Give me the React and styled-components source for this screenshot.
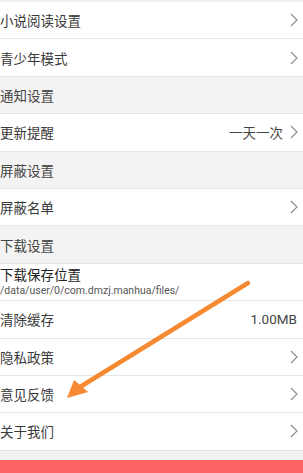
import React from "react";
import styled, { createGlobalStyle } from "styled-components";

const Global = createGlobalStyle`
  body {
    margin: 0;
    background: #f2f2f2;
    font-family: "Noto Sans CJK SC", "Noto Sans", sans-serif;
  }
`;

const items = [
  { type: "row", label: "小说阅读设置", arrow: true },
  { type: "row", label: "青少年模式", arrow: true },
  { type: "head", label: "通知设置" },
  { type: "row", label: "更新提醒", value: "一天一次", arrow: true },
  { type: "head", label: "屏蔽设置" },
  { type: "row", label: "屏蔽名单", arrow: true },
  { type: "head", label: "下载设置" },
  { type: "path", label: "下载保存位置", sub: "/data/user/0/com.dmzj.manhua/files/" },
  { type: "row", label: "清除缓存", value: "1.00MB", latin: true },
  { type: "row", label: "隐私政策", arrow: true },
  { type: "row", label: "意见反馈", arrow: true },
  { type: "row", label: "关于我们", arrow: true },
];

const Chevron = () => (
  <svg width="8" height="14" viewBox="0 0 8 14">
    <path d="M1 1 L7 7 L1 13" fill="none" stroke="#8a8a8a" strokeWidth="1.1" />
  </svg>
);

const Settings = () => {
  return (
    <Page>
      <Global />
      <List>
        {items.map((item, index) =>
          item.type === "head" ? (
            <Head key={index}>{item.label}</Head>
          ) : item.type === "path" ? (
            <PathRow key={index}>
              <Title>{item.label}</Title>
              <Sub>{item.sub}</Sub>
            </PathRow>
          ) : (
            <Row key={index}>
              <Label>{item.label}</Label>
              <Right>
                {item.value && <Value latin={item.latin}>{item.value}</Value>}
                {item.arrow && <Chevron />}
              </Right>
            </Row>
          )
        )}
      </List>
      <Logout />
      <Arrow viewBox="0 0 303 473">
        <line x1="248" y1="283" x2="80" y2="387" stroke="#f68a32" strokeWidth="4.5" strokeLinecap="round" />
        <polygon points="67,398 74,380 88,392" fill="#f68a32" />
      </Arrow>
    </Page>
  );
};

export default Settings;

const Page = styled.div`
  position: relative;
  width: 303px;
  height: 473px;
  overflow: hidden;
  padding-top: 2px;
  box-sizing: border-box;
`;

const List = styled.div`
  display: flex;
  flex-direction: column;
  border-bottom: 1px solid #e2e2e2;
`;

const Row = styled.div`
  box-sizing: border-box;
  height: 37.4px;
  background: #fff;
  border-top: 1px solid #e6e6e6;
  display: flex;
  align-items: center;
  justify-content: space-between;
  padding: 0 5px 0 0;
  &:first-child {
    border-top: none;
    height: 36.4px;
  }
`;

const Label = styled.span`
  font-size: 13.5px;
  color: #3a3a3a;
`;

const Right = styled.div`
  display: flex;
  align-items: center;
  gap: 7px;
`;

const Value = styled.span`
  font-size: 13.5px;
  color: #444;
  font-family: ${(p) => (p.latin ? '"Roboto", sans-serif' : "inherit")};
  margin-right: ${(p) => (p.latin ? "1px" : "0")};
`;

const Head = styled.div`
  box-sizing: border-box;
  height: 37.4px;
  background: #f3f3f3;
  border-top: 1px solid #e6e6e6;
  display: flex;
  align-items: center;
  font-size: 13.5px;
  color: #444;
`;

const PathRow = styled.div`
  box-sizing: border-box;
  height: 37.4px;
  background: #fff;
  border-top: 1px solid #e6e6e6;
  display: flex;
  flex-direction: column;
  justify-content: center;
  gap: 1px;
`;

const Title = styled.span`
  font-size: 13.5px;
  color: #222;
  line-height: 17px;
`;

const Sub = styled.span`
  font-family: "Roboto", sans-serif;
  font-size: 10.5px;
  color: #555;
  line-height: 13px;
`;

const Logout = styled.div`
  margin-top: 9px;
  height: 20px;
  background: #fe6465;
`;

const Arrow = styled.svg`
  position: absolute;
  left: 0;
  top: 0;
  width: 303px;
  height: 473px;
  pointer-events: none;
`;
